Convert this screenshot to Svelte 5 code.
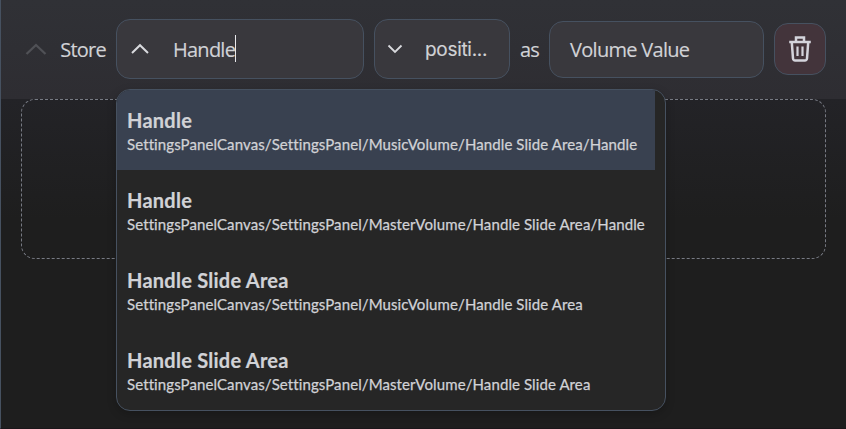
<script>
  const options = [
    { name: 'Handle', path: 'SettingsPanelCanvas/SettingsPanel/MusicVolume/Handle Slide Area/Handle' },
    { name: 'Handle', path: 'SettingsPanelCanvas/SettingsPanel/MasterVolume/Handle Slide Area/Handle' },
    { name: 'Handle Slide Area', path: 'SettingsPanelCanvas/SettingsPanel/MusicVolume/Handle Slide Area' },
    { name: 'Handle Slide Area', path: 'SettingsPanelCanvas/SettingsPanel/MasterVolume/Handle Slide Area' }
  ];
  let selected = $state(0);
</script>

<main>
  <header>
    <svg class="collapse" width="22" height="14" viewBox="0 0 22 14"><path d="M1.5 12 11 3l9.500 9" /></svg>
    <span class="store">Store</span>
    <div class="box target">
      <svg width="18" height="12" viewBox="0 0 18 12"><path d="M1 10 9 2.200l8 7.800" /></svg>
      <span class="value">Handle</span><i class="caret"></i>
    </div>
    <div class="box property">
      <svg width="16" height="12" viewBox="0 0 16 12"><path d="M1.500 2.500 8 9l6.500-6.500" /></svg>
      <span class="prop">positi...</span>
    </div>
    <span class="as">as</span>
    <div class="box variable"><span>Volume Value</span></div>
    <button aria-label="Delete">
      <svg width="24" height="28" viewBox="0 0 24 28"><path d="M1.200 7h21.600M8 6.500V2.400h8v4.100M3.800 7.500l1.200 16q.2 2 2.200 2h9.600q2 0 2.200-2l1.200-16" /><path class="slats" d="M9.500 11.500v9.500M14.500 11.500v9.500" /></svg>
    </button>
  </header>
  <section></section>
  <div class="menu">
    {#each options as option, i}
      <div class="option" class:active={i === selected}>
        <b>{option.name}</b>
        <span>{option.path}</span>
      </div>
    {/each}
  </div>
</main>

<style>
  :global(body) { margin: 0; }
  main {
    position: relative;
    box-sizing: border-box;
    width: 846px;
    height: 429px;
    overflow: hidden;
    border-left: 1px solid #465160;
    border-bottom: 1px solid #1b161a;
    background: linear-gradient(#232327 99px, #1e1e1e 220px);
    color: #d1d2d6;
    font: 20px/28px "Open Sans", "Noto Sans", sans-serif;
  }
  header {
    box-sizing: border-box;
    display: flex;
    align-items: center;
    height: 99px;
    padding: 0 20px 1px 24px;
    background: linear-gradient(#303136, #2e2d32);
  }
  svg { display: block; flex: none; fill: none; stroke: #d9dade; stroke-width: 2; }
  .collapse { stroke: #505156; stroke-width: 2.3; }
  span { white-space: nowrap; }
  .store { width: 46px; margin: 2px 10px 0 13px; letter-spacing: -.8px; text-indent: .3px; }
  .box {
    box-sizing: border-box;
    display: flex;
    align-items: center;
    flex: none;
    height: 60px;
    border: 1px solid #465160;
    border-radius: 14px;
    background: #39383d;
  }
  .target { width: 248px; padding-left: 14px; }
  .value { width: 62px; margin: 2px 0 0 24px; letter-spacing: -.75px; }
  .caret { width: 1px; height: 27px; margin-top: -2px; background: #e8e8eb; }
  .property { width: 136px; margin-left: 10px; padding-left: 12px; }
  .property svg { stroke-width: 1.8; }
  .prop { margin: 2px 0 0 22px; font-family: Inter, sans-serif; font-size: 19px; letter-spacing: -.3px; -webkit-text-stroke: .15px; }
  .as { width: 20px; margin: 2px 9px 0 10px; letter-spacing: -.8px; }
  .variable { width: 215px; height: 57px; margin-top: 1px; padding-left: 20px; }
  .variable span { letter-spacing: -.7px; }
  .store, .value, .as, .variable span { -webkit-text-stroke: .15px; }
  button {
    box-sizing: border-box;
    display: grid;
    place-items: center;
    width: 52px;
    height: 52px;
    margin-left: 10px;
    padding: 0;
    border: 1px solid #465160;
    border-radius: 14px;
    background: #43343b;
  }
  button svg { stroke-width: 2.5; stroke: #d4d4dc; }
  .slats { stroke-width: 2.2; }
  section {
    box-sizing: border-box;
    width: 805px;
    height: 160px;
    margin-left: 20px;
    border: 1px dashed #777a83;
    border-radius: 14px;
  }
  .menu {
    position: absolute;
    box-sizing: border-box;
    top: 89px;
    left: 115px;
    width: 550px;
    height: 322px;
    overflow: hidden;
    border: 1px solid #465160;
    border-radius: 14px;
    background: #262626;
    box-shadow: 0 3px 10px #0003;
    font-family: Lato, sans-serif;
  }
  .option {
    box-sizing: border-box;
    display: flex;
    flex-direction: column;
    width: 538px;
    height: 80px;
    padding: 17px 10px 0;
  }
  .active { background: #394150; }
  b { font-size: 20px; line-height: 26px; letter-spacing: .25px; -webkit-text-stroke: .2px; }
  .option span { font-size: 15px; line-height: 22px; letter-spacing: .1px; -webkit-text-stroke: .25px; }
</style>
